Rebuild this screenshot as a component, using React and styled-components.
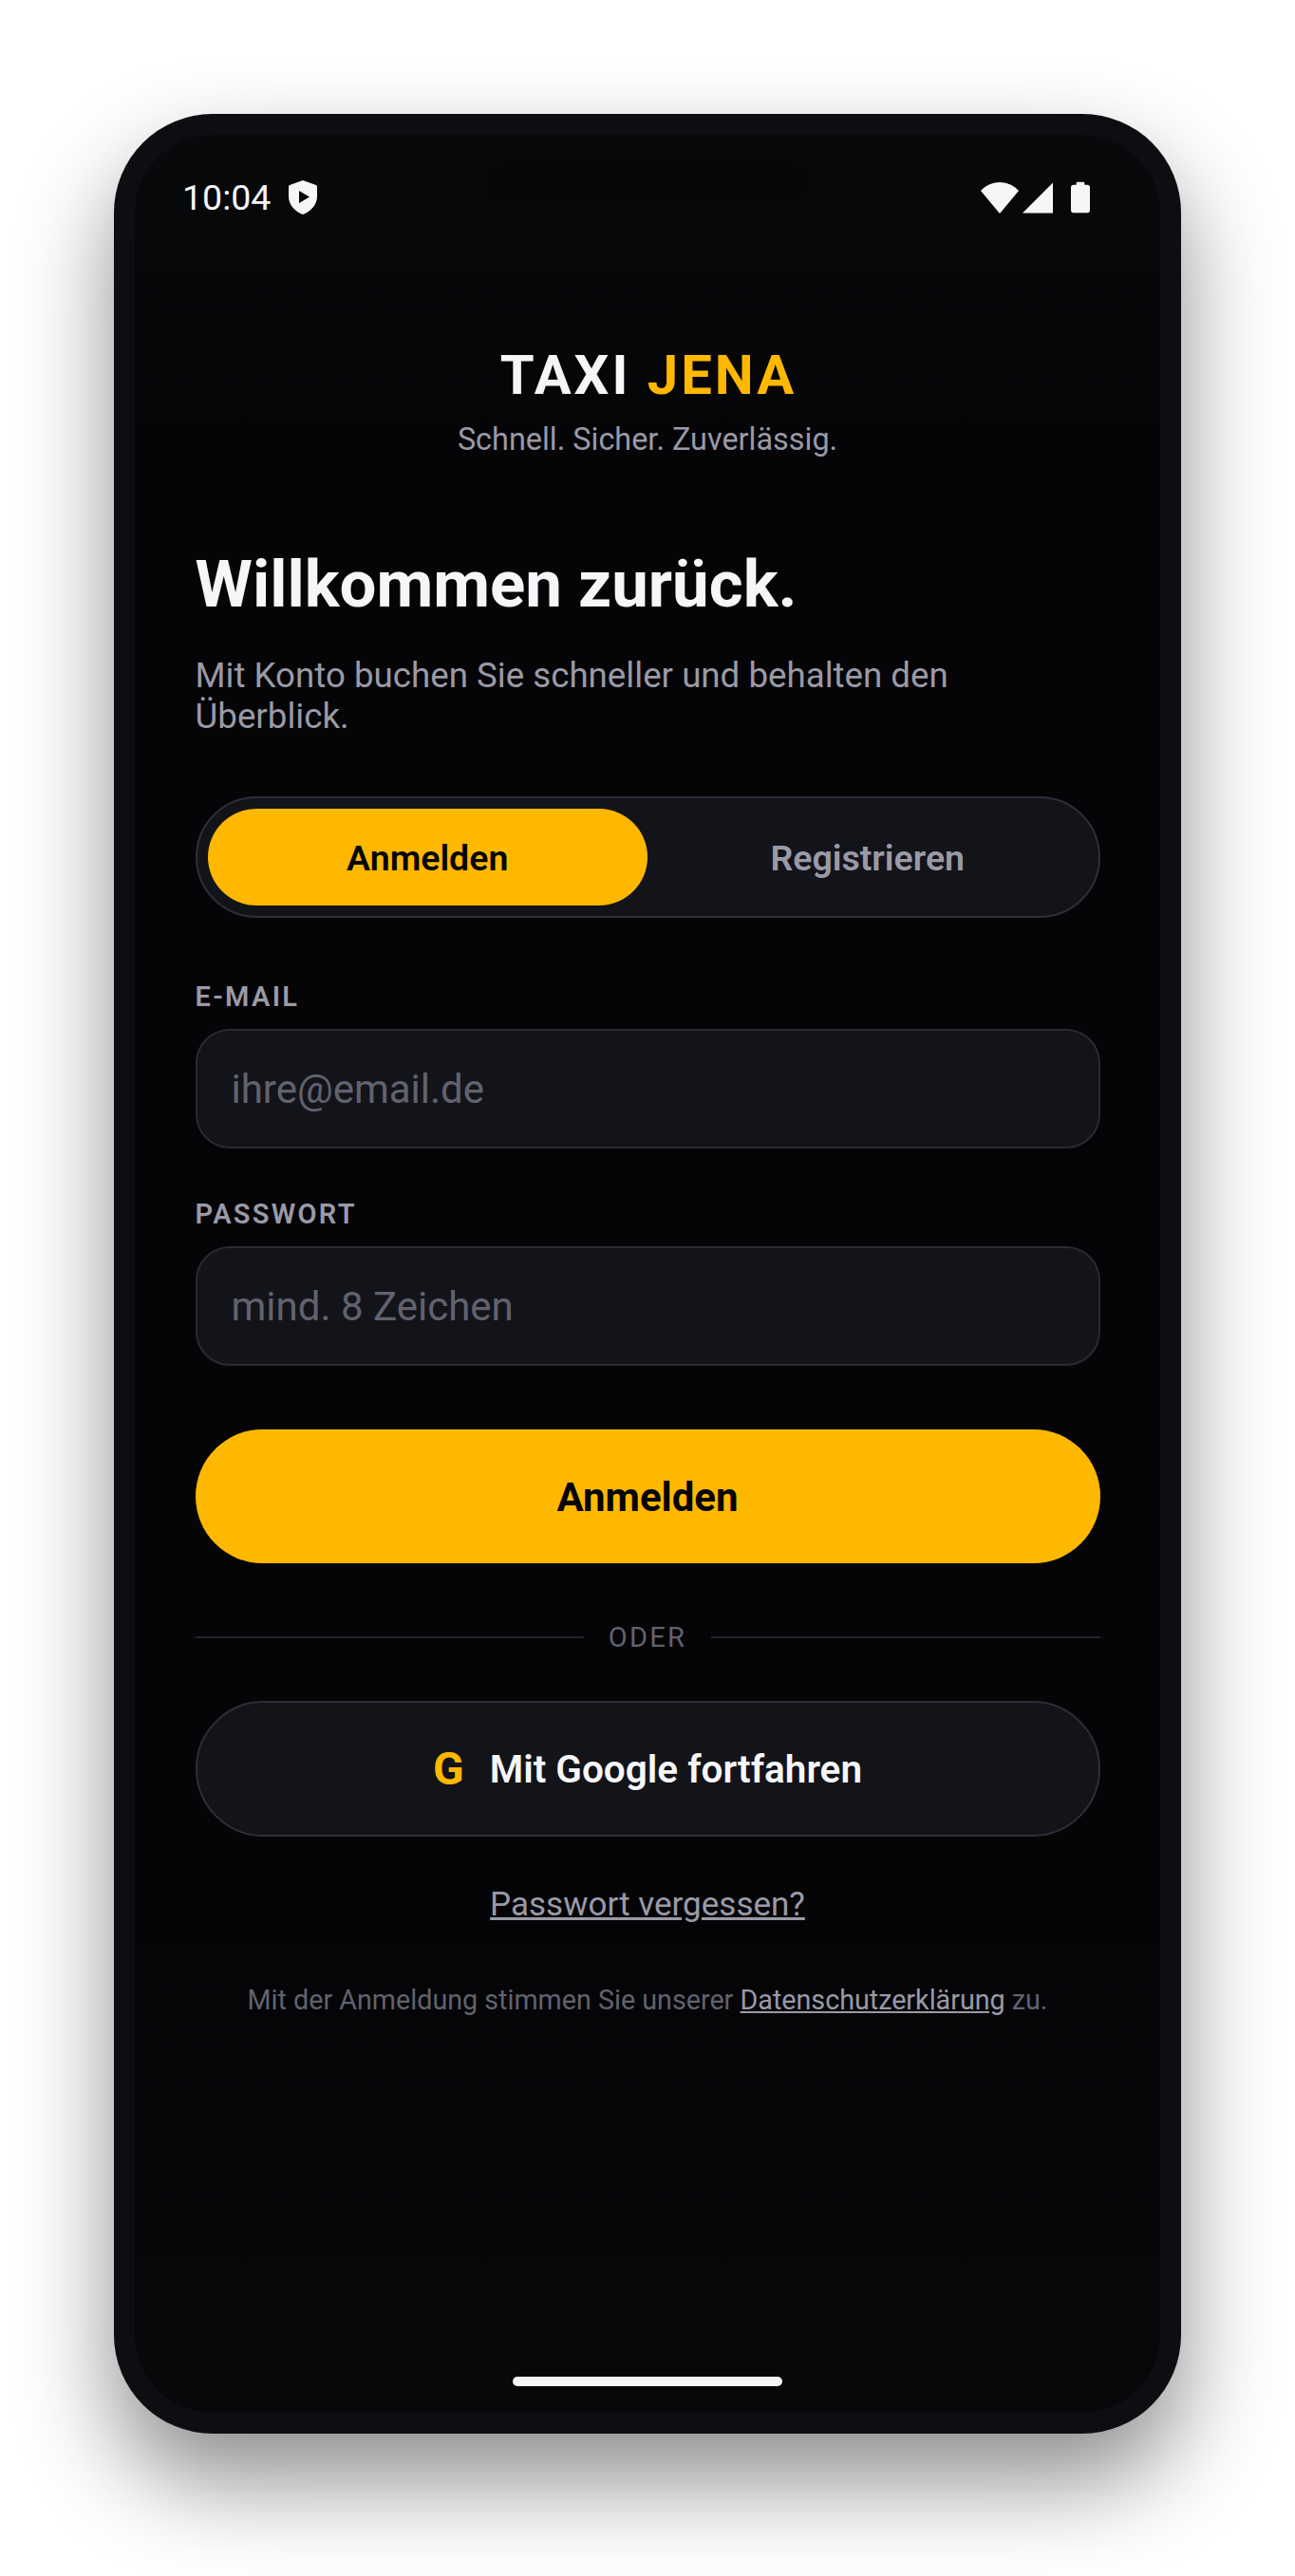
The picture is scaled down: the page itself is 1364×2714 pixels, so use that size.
import React from "react"
import styled, { createGlobalStyle } from "styled-components"

const GlobalStyle = createGlobalStyle`
  html, body {
    margin: 0;
    padding: 0;
    background: #fff;
  }
  * {
    box-sizing: border-box;
  }
`

const Page = styled.div`
  width: 1364px;
  height: 2714px;
  padding: 120px 120px 0;
  background: #fff;
  overflow: hidden;
  font-family: Roboto, "Liberation Sans", sans-serif;
`
const Phone = styled.div`
  height: 2444px;
  border-radius: 104px;
  background: #0e0e12;
  padding: 22px;
  box-shadow: 0 50px 100px rgba(0, 0, 0, 0.45);
`
const Screen = styled.div`
  position: relative;
  height: 100%;
  border-radius: 82px;
  background: linear-gradient(#08090b 0, #050508 300px, #050508 1900px, #08080a 100%);
  display: flex;
  flex-direction: column;
  overflow: hidden;
`
const Camera = styled.div`
  position: absolute;
  top: 26px;
  left: 368px;
  width: 344px;
  height: 49px;
  border-radius: 24px;
  background: #060709;
`
const StatusBar = styled.div`
  display: flex;
  align-items: center;
  justify-content: space-between;
  height: 40px;
  margin-top: 46px;
  padding: 0 74px 0 50px;
  color: #f6f6f8;
`
const StatusLeft = styled.div`
  display: flex;
  align-items: center;
  gap: 19px;
`
const StatusRight = styled.div`
  display: flex;
  align-items: center;
`
const Time = styled.span`
  font-size: 37.5px;
  line-height: 40px;
`
const Content = styled.div`
  display: flex;
  flex-direction: column;
  padding: 0 63.5px;
  margin-top: 133px;
  flex: 1;
`
const Logo = styled.div`
  padding-left: 2px;
  text-align: center;
  font-size: 58px;
  line-height: 68px;
  font-weight: 700;
  letter-spacing: 3px;
  color: #f6f6f8;
`
const Accent = styled.span`
  color: #ffb800;
`
const Tagline = styled.div`
  text-align: center;
  margin-top: 14px;
  font-size: 32.4px;
  line-height: 40px;
  color: #9a9aa6;
`
const Heading = styled.h1`
  margin: 88px 0 0;
  font-size: 69px;
  line-height: 90px;
  font-weight: 700;
  color: #f6f6f8;
`
const Intro = styled.p`
  margin: 29px 0 0;
  font-size: 36.7px;
  line-height: 43px;
  color: #9a9aa6;
`
const Toggle = styled.div`
  display: grid;
  grid-template-columns: 1fr 1fr;
  height: 128px;
  margin-top: 63px;
  padding: 11px;
  border: 2px solid #2e2e38;
  border-radius: 64px;
  background: #13141a;
`
const ToggleItem = styled.div`
  display: flex;
  align-items: center;
  justify-content: center;
  padding-top: 2px;
  border-radius: 52px;
  font-size: 37.5px;
  font-weight: 600;
  background: ${(p) => (p.$active ? "#ffb800" : "transparent")};
  color: ${(p) => (p.$active ? "#050507" : "#9a9aa6")};
`
const Label = styled.label`
  display: block;
  margin-bottom: 17px;
  font-size: 29px;
  line-height: 34px;
  font-weight: 600;
  letter-spacing: 2.3px;
  color: #9a9aa6;
`
const Field = styled.div`
  margin-top: ${(p) => p.$top}px;
`
const Input = styled.input`
  display: block;
  width: 100%;
  height: 126px;
  padding: 0 36px;
  border: 2px solid #2a2a33;
  border-radius: 36px;
  background: #13141a;
  outline: none;
  font-family: inherit;
  font-size: 42px;
  color: #f6f6f8;

  &::placeholder {
    color: #62626e;
    opacity: 1;
  }
`
const PrimaryButton = styled.button`
  display: block;
  width: 100%;
  height: 141px;
  margin-top: 67px;
  padding: 2px 0 0;
  border: none;
  border-radius: 71px;
  background: #ffb800;
  font-family: inherit;
  font-size: 42px;
  font-weight: 700;
  color: #050507;
`
const Divider = styled.div`
  display: flex;
  align-items: center;
  gap: 26px;
  margin-top: 60px;
  font-size: 29px;
  line-height: 36px;
  letter-spacing: 2.3px;
  color: #62626e;

  &::before,
  &::after {
    content: "";
    flex: 1;
    height: 2px;
    background: #23232b;
  }
`
const GoogleButton = styled.button`
  display: flex;
  align-items: center;
  justify-content: center;
  gap: 27px;
  width: 100%;
  height: 143px;
  margin-top: 49px;
  border: 2px solid #2e2e38;
  border-radius: 72px;
  background: #13141a;
  font-family: inherit;
  font-size: 40.5px;
  font-weight: 600;
  color: #f6f6f8;
`
const GoogleMark = styled.span`
  font-size: 48px;
  font-weight: 700;
  color: #ffb800;
`
const ForgotLink = styled.a`
  align-self: center;
  margin-top: 51px;
  font-size: 35px;
  line-height: 42px;
  color: #9a9aa6;
  text-decoration: underline;
`
const Legal = styled.p`
  margin: 61px 0 0;
  text-align: center;
  font-size: 28.7px;
  line-height: 36px;
  color: #62626e;
`
const LegalLink = styled.a`
  color: #9a9aa6;
  text-decoration: underline;
`
const HomeBar = styled.div`
  align-self: center;
  width: 284px;
  height: 10px;
  margin-bottom: 28px;
  border-radius: 5px;
  background: #f6f6f8;
`

const ShieldIcon = () => (
  <svg width="30" height="36" viewBox="0 0 30 36">
    <path
      fill="#f6f6f8"
      fillRule="evenodd"
      d="M15 0 L29 5 Q30 5.5 30 7 V17 C30 26 23 33 15 36 C7 33 0 26 0 17 V7 Q0 5.5 1 5 Z M11 11 V24 L22 17.5 Z"
    />
  </svg>
)

const WifiIcon = () => (
  <svg width="40" height="33" viewBox="0 0 40 33">
    <path fill="#f6f6f8" d="M20 33 L0 9 C5 3.5 12 0 20 0 C28 0 35 3.5 40 9 Z" />
  </svg>
)

const SignalIcon = () => (
  <svg width="32" height="33" viewBox="0 0 33 33" style={{ marginLeft: 4 }}>
    <path fill="#f6f6f8" d="M33 0 V33 H0 Z" />
  </svg>
)

const BatteryIcon = () => (
  <svg width="20" height="34" viewBox="0 0 21 34" style={{ marginLeft: 19 }}>
    <path
      fill="#f6f6f8"
      d="M6 3 V1 Q6 0 7 0 H14 Q15 0 15 1 V3 H18 Q21 3 21 6 V31 Q21 34 18 34 H3 Q0 34 0 31 V6 Q0 3 3 3 Z"
    />
  </svg>
)

const App = () => {
  return (
    <Page>
      <GlobalStyle />
      <Phone>
        <Screen>
          <Camera />
          <StatusBar>
            <StatusLeft>
              <Time>10:04</Time>
              <ShieldIcon />
            </StatusLeft>
            <StatusRight>
              <WifiIcon />
              <SignalIcon />
              <BatteryIcon />
            </StatusRight>
          </StatusBar>
          <Content>
            <Logo>
              TAXI <Accent>JENA</Accent>
            </Logo>
            <Tagline>Schnell. Sicher. Zuverlässig.</Tagline>
            <Heading>Willkommen zurück.</Heading>
            <Intro>Mit Konto buchen Sie schneller und behalten den Überblick.</Intro>
            <Toggle>
              <ToggleItem $active>Anmelden</ToggleItem>
              <ToggleItem>Registrieren</ToggleItem>
            </Toggle>
            <Field $top={66}>
              <Label>E-MAIL</Label>
              <Input type="email" placeholder="ihre@email.de" />
            </Field>
            <Field $top={52}>
              <Label>PASSWORT</Label>
              <Input type="password" placeholder="mind. 8 Zeichen" />
            </Field>
            <PrimaryButton>Anmelden</PrimaryButton>
            <Divider>ODER</Divider>
            <GoogleButton>
              <GoogleMark>G</GoogleMark>
              Mit Google fortfahren
            </GoogleButton>
            <ForgotLink>Passwort vergessen?</ForgotLink>
            <Legal>
              Mit der Anmeldung stimmen Sie unserer <LegalLink>Datenschutzerklärung</LegalLink> zu.
            </Legal>
          </Content>
          <HomeBar />
        </Screen>
      </Phone>
    </Page>
  )
}

export default App
